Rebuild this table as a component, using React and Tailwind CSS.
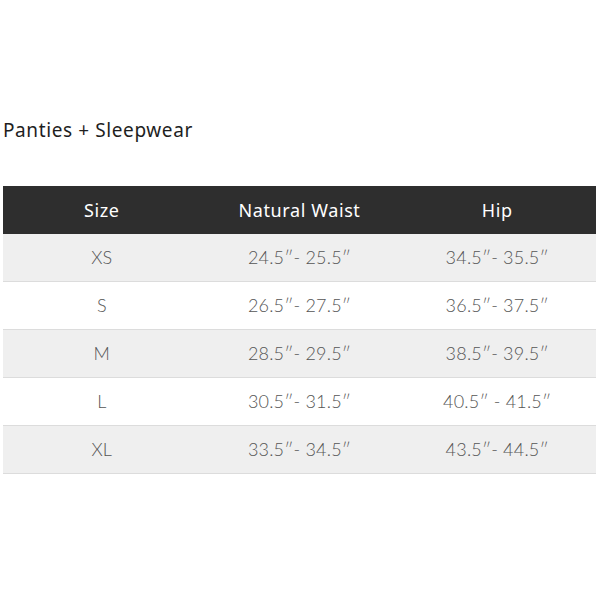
import React from "react";

const rows = [
  ["XS", "24.5\u2033- 25.5\u2033", "34.5\u2033- 35.5\u2033"],
  ["S", "26.5\u2033- 27.5\u2033", "36.5\u2033- 37.5\u2033"],
  ["M", "28.5\u2033- 29.5\u2033", "38.5\u2033- 39.5\u2033"],
  ["L", "30.5\u2033- 31.5\u2033", "40.5\u2033 - 41.5\u2033"],
  ["XL", "33.5\u2033- 34.5\u2033", "43.5\u2033- 44.5\u2033"],
];

export default function App() {
  return (
    <div className="w-[600px] h-[600px] bg-white pt-[117px] px-[3px]" style={{ fontFamily: "'Noto Sans', 'Open Sans', sans-serif" }}>
      {/* Title */}
      <h2 className="text-[19px] leading-[26px] text-[#1e1e1e] tracking-[0.6px]">Panties + Sleepwear</h2>

      {/* Size table */}
      <div className="mt-[43px] w-[593px]">
        <div className="grid grid-cols-3 h-[48px] items-center bg-[#2e2e2e] text-white text-[18px] tracking-[0.6px] text-center">
          <div>Size</div>
          <div>Natural Waist</div>
          <div>Hip</div>
        </div>
        {rows.map((r, i) => (
          <div
            key={r[0]}
            className={`grid grid-cols-3 h-[48px] items-center text-center text-[18px] font-light text-[#555] tracking-[0.2px] border-b border-[#dcdcdc] ${i % 2 === 0 ? "bg-[#efefef]" : "bg-white"}`}
            style={{ fontFamily: "Lato, 'Noto Sans', sans-serif" }}
          >
            <div>{r[0]}</div>
            <div>{r[1]}</div>
            <div>{r[2]}</div>
          </div>
        ))}
      </div>
    </div>
  );
}
